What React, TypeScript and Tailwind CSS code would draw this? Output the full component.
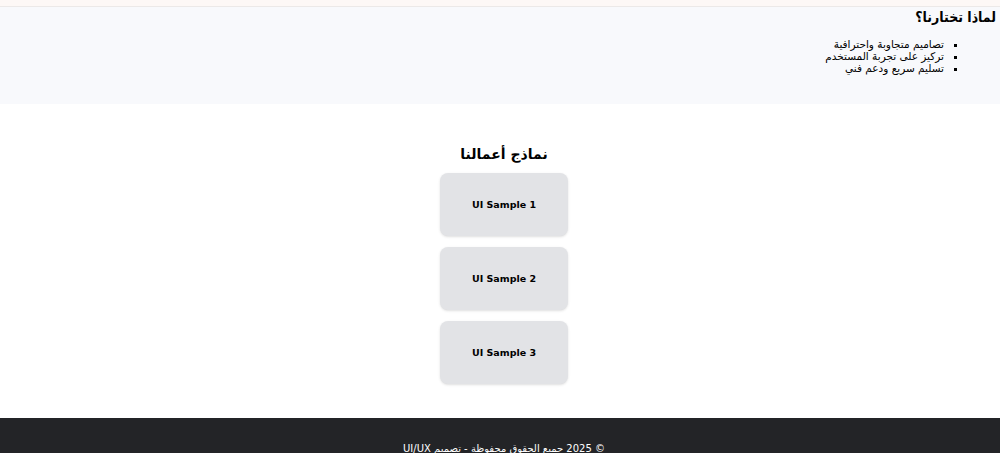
export default function App() {
  const samples = ['UI Sample 1', 'UI Sample 2', 'UI Sample 3'];
  return (
    <div dir="rtl" className="w-[1000px] h-[453px] overflow-hidden bg-white text-black" style={{ fontFamily: '"DejaVu Sans", sans-serif' }}>
      <div className="h-[7px] bg-[#fdf8f6] border-b border-[#ece9e8]" />
      <section className="h-[97px] bg-[#f8f9fc] pr-1 pt-px">
        <h2 className="text-[14px] font-bold leading-[18px] tracking-[-0.5px]" style={{ fontFamily: '"DejaVu Sans Condensed", "DejaVu Sans", sans-serif' }}>لماذا تختارنا؟</h2>
        <ul className="mt-[12px] pr-[52px] text-[10.5px] leading-[12px] list-[square]">
          <li>تصاميم متجاوبة واحترافية</li>
          <li>تركيز على تجربة المستخدم</li>
          <li>تسليم سريع ودعم فني</li>
        </ul>
      </section>
      <section className="h-[314px] flex flex-col items-center pt-[40px] pl-[8px]">
        <h2 className="text-[14px] font-bold leading-[20px] mb-[9px]">نماذج أعمالنا</h2>
        <div className="flex flex-col gap-[11px]">
          {samples.map(s => (
            <div key={s} className="w-32 h-[63px] rounded-lg bg-[#e2e3e6] shadow-sm flex items-center justify-center pt-[1px]">
              <span dir="ltr" className="text-[9.5px] font-bold">{s}</span>
            </div>
          ))}
        </div>
      </section>
      <footer className="h-[35px] bg-[#232427] text-white text-[10px] flex items-start justify-center pt-[23px] pl-2">
        <span>© 2025 جميع الحقوق محفوظة - تصميم UI/UX</span>
      </footer>
    </div>
  );
}
